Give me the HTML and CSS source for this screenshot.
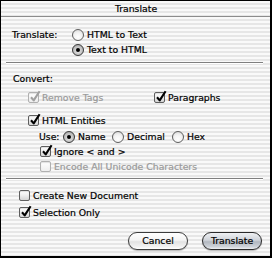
FILE: index.html
```html
<!DOCTYPE html>
<html>
<head>
<meta charset="utf-8">
<link rel="stylesheet" href="styles.css">
</head>
<body>
<div class="dialog">
  <div class="titlebar">Translate</div>
  <div class="sec-translate">
    <div class="lbl">Translate:</div>
    <div class="opts">
      <div class="row"><span class="radio"></span><span class="txt">HTML to Text</span></div>
      <div class="row"><span class="radio on"></span><span class="txt">Text to HTML</span></div>
    </div>
  </div>
  <div class="sep sep1"></div>
  <div class="row convert">Convert:</div>
  <div class="row r-remove">
    <div class="ctl w-remove dis"><span class="box checked"><svg class="chk" width="12" height="13" viewBox="0 0 12 13"><path d="M2 7.3 L4.7 10.4 L10.6 1.2" fill="none" stroke-width="2.1" stroke-linejoin="round"/></svg></span><span class="txt">Remove Tags</span></div>
    <div class="ctl"><span class="box checked"><svg class="chk" width="12" height="13" viewBox="0 0 12 13"><path d="M2 7.3 L4.7 10.4 L10.6 1.2" fill="none" stroke-width="2.1" stroke-linejoin="round"/></svg></span><span class="txt">Paragraphs</span></div>
  </div>
  <div class="row r-entities">
    <div class="ctl"><span class="box checked"><svg class="chk" width="12" height="13" viewBox="0 0 12 13"><path d="M2 7.3 L4.7 10.4 L10.6 1.2" fill="none" stroke-width="2.1" stroke-linejoin="round"/></svg></span><span class="txt">HTML Entities</span></div>
  </div>
  <div class="row r-use">
    <span class="use-lbl">Use:</span>
    <div class="ctl w-name"><span class="radio on"></span><span class="txt">Name</span></div>
    <div class="ctl w-dec"><span class="radio"></span><span class="txt">Decimal</span></div>
    <div class="ctl"><span class="radio"></span><span class="txt">Hex</span></div>
  </div>
  <div class="row r-sub">
    <div class="ctl"><span class="box checked"><svg class="chk" width="12" height="13" viewBox="0 0 12 13"><path d="M2 7.3 L4.7 10.4 L10.6 1.2" fill="none" stroke-width="2.1" stroke-linejoin="round"/></svg></span><span class="txt">Ignore &lt; and &gt;</span></div>
  </div>
  <div class="row r-sub">
    <div class="ctl dis"><span class="box"></span><span class="txt">Encode All Unicode Characters</span></div>
  </div>
  <div class="sep sep2"></div>
  <div class="row r-create">
    <div class="ctl"><span class="box"></span><span class="txt">Create New Document</span></div>
  </div>
  <div class="row r-sel">
    <div class="ctl"><span class="box checked"><svg class="chk" width="12" height="13" viewBox="0 0 12 13"><path d="M2 7.3 L4.7 10.4 L10.6 1.2" fill="none" stroke-width="2.1" stroke-linejoin="round"/></svg></span><span class="txt">Selection Only</span></div>
  </div>
  <div class="buttons">
    <div class="btn">Cancel</div>
    <div class="btn default">Translate</div>
  </div>
</div>
</body>
</html>
```

FILE: styles.css
```css
html, body {
  margin: 0;
  padding: 0;
}
body {
  width: 272px;
  height: 258px;
  overflow: hidden;
  font-family: "DejaVu Sans", "Verdana", sans-serif;
  font-size: 9.3px;
  color: #000;
  -webkit-text-stroke: 0.2px currentColor;
}
.dialog {
  box-sizing: border-box;
  width: 272px;
  height: 258px;
  border-top: 1px solid #000;
  border-left: 1px solid #000;
  border-right: 2px solid #000;
  border-bottom: 2px solid #000;
  background: repeating-linear-gradient(to bottom, #f9f9f9 0, #f9f9f9 2px, #e6e6e6 2px, #e6e6e6 4px);
  display: flex;
  flex-direction: column;
}
.titlebar {
  height: 15px;
  line-height: 15px;
  border-bottom: 1px solid #8c8c8c;
  text-align: center;
  padding-left: 1px;
}
.sec-translate {
  display: flex;
  margin-top: 10px;
  padding-left: 11px;
}
.lbl {
  width: 60px;
  height: 15px;
  line-height: 15px;
}
.opts {
  display: flex;
  flex-direction: column;
}
.row {
  display: flex;
  align-items: center;
  height: 15px;
  white-space: nowrap;
}
.ctl {
  display: flex;
  align-items: center;
}
.txt {
  margin-left: 3px;
}
.dis {
  color: #9a9a9a;
}
.sep {
  height: 0;
  border-top: 1px solid #7f7f7f;
  border-bottom: 1px solid #ffffff;
  margin-left: 5px;
  margin-right: 7px;
}
.sep1 { margin-top: 5px; }
.convert { margin-top: 7px; padding-left: 12px; }
.r-remove { margin-top: 4px; padding-left: 27px; }
.w-remove { width: 126px; }
.r-entities { margin-top: 8px; padding-left: 27px; }
.r-use { margin-top: 1px; padding-left: 38px; }
.use-lbl { width: 24px; }
.w-name { width: 49px; }
.w-dec { width: 60px; }
.r-sub { padding-left: 39px; }
.sep2 { margin-top: 4px; }
.r-create { margin-top: 8px; padding-left: 18px; }
.r-sel { margin-top: 2px; padding-left: 18px; }

.box {
  position: relative;
  box-sizing: border-box;
  width: 11px;
  height: 11px;
  border: 1px solid #5e5e5e;
  border-radius: 2px;
  background: linear-gradient(to bottom, #ffffff 0%, #f0f0f0 45%, #d4d4d4 100%);
  box-shadow: inset 0 1px 1px rgba(0,0,0,0.12);
  flex: none;
}
.dis .box {
  border-color: #b0b0b0;
  background: linear-gradient(to bottom, #ffffff, #eeeeee);
}
.chk {
  position: absolute;
  left: 0;
  top: -3px;
  overflow: visible;
}
.chk path { stroke: #000; }
.dis .chk path { stroke: #a0a0a0; }

.radio {
  position: relative;
  box-sizing: border-box;
  width: 12px;
  height: 12px;
  border: 1px solid #5e5e5e;
  border-radius: 50%;
  background: radial-gradient(circle at 50% 70%, #ffffff 0%, #f2f2f2 50%, #d0d0d0 100%);
  flex: none;
}
.radio.on {
  background: radial-gradient(circle at 50% 60%, #e8e8e8 0%, #bdbdbd 60%, #8a8a8a 100%);
  border-color: #3a3a3a;
}
.radio.on::after {
  content: "";
  position: absolute;
  left: 3px;
  top: 3px;
  width: 4px;
  height: 4px;
  border-radius: 50%;
  background: #000;
}

.buttons {
  display: flex;
  justify-content: flex-end;
  gap: 14px;
  margin-top: 12px;
  padding-right: 8px;
}
.btn {
  box-sizing: border-box;
  width: 60px;
  height: 18px;
  line-height: 16px;
  text-align: center;
  border: 1px solid #3c3c3c;
  border-radius: 9px;
  background: linear-gradient(to bottom, #ffffff 0%, #f4f4f4 45%, #e2e2e2 55%, #f2f2f2 85%, #ffffff 100%);
  box-shadow: 0 1px 1px rgba(0,0,0,0.25);
}
.btn.default {
  background: linear-gradient(to bottom, #eef0f3 0%, #cfd3d9 45%, #b3b8c0 55%, #cdd2d8 85%, #eef0f3 100%);
  border-color: #2a2a2a;
}
```
